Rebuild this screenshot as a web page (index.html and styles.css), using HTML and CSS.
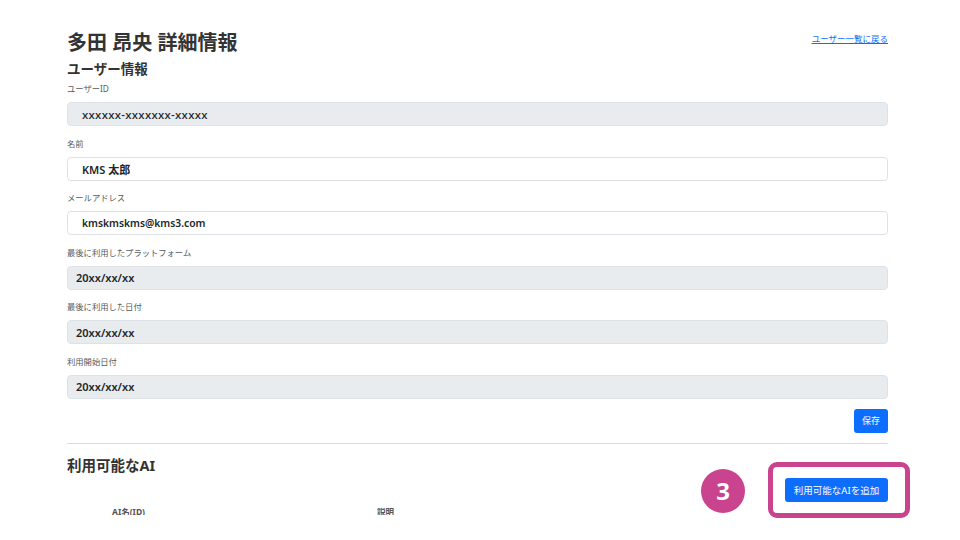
FILE: index.html
```html
<!DOCTYPE html>
<html lang="ja">
<head>
    <meta charset="UTF-8">
    <meta name="viewport" content="width=device-width, initial-scale=1.0">
    <title>多田 昂央 詳細情報</title>
    <link rel="stylesheet" href="styles.css">
</head>
<body>
    <div class="page">
        <div class="header">
            <h1>多田 昂央 詳細情報</h1>
            <a href="#" class="back-link">ユーザー一覧に戻る</a>
        </div>

        <h2>ユーザー情報</h2>
        <form class="user-form">
            <div class="field">
                <label>ユーザーID</label>
                <div class="input readonly wide id-value">xxxxxx-xxxxxxx-xxxxx</div>
            </div>
            <div class="field">
                <label>名前</label>
                <div class="input wide strong">KMS 太郎</div>
            </div>
            <div class="field">
                <label>メールアドレス</label>
                <div class="input wide strong email">kmskmskms@kms3.com</div>
            </div>
            <div class="field">
                <label>最後に利用したプラットフォーム</label>
                <div class="input readonly strong">20xx/xx/xx</div>
            </div>
            <div class="field">
                <label>最後に利用した日付</label>
                <div class="input readonly strong">20xx/xx/xx</div>
            </div>
            <div class="field">
                <label>利用開始日付</label>
                <div class="input readonly strong">20xx/xx/xx</div>
            </div>
            <div class="actions">
                <button type="button" class="btn">保存</button>
            </div>
        </form>

        <hr>

        <h3>利用可能なAI</h3>
        <div class="actions">
            <button type="button" class="btn btn-add">利用可能なAIを追加</button>
        </div>
        <table class="ai-table">
            <thead>
                <tr>
                    <th class="col-name">AI名(ID)</th>
                    <th class="col-desc">説明</th>
                </tr>
            </thead>
        </table>
    </div>

    <!-- step annotation -->
    <div class="step-badge">3</div>
    <div class="step-frame"></div>
</body>
</html>
```

FILE: styles.css
```css
/* Basic reset */
* {
    box-sizing: border-box;
    margin: 0;
    padding: 0;
}

body {
    position: relative;
    width: 960px;
    height: 540px;
    background-color: #ffffff;
    font-family: "Noto Sans", "Noto Sans CJK JP", sans-serif;
    color: #212529;
    overflow: hidden;
}

/* Page column, bottom is cut off */
.page {
    width: 821px;
    height: 515px;
    margin-left: 67px;
    padding-top: 29px;
    overflow: hidden;
}

.header {
    display: flex;
    justify-content: space-between;
    align-items: flex-start;
}

h1 {
    font-size: 20px;
    font-weight: 700;
    line-height: 27px;
    color: #333;
}

.back-link {
    margin-top: 3px;
    font-size: 8.5px;
    color: #0d6efd;
    text-decoration: underline;
}

h2 {
    margin-top: 2px;
    font-size: 13.5px;
    font-weight: 700;
    line-height: 22px;
    color: #333;
}

/* Form */
.user-form {
    margin-top: 3px;
}

.field {
    margin-bottom: 11.6px;
}

.field label {
    display: block;
    margin-bottom: 7px;
    font-size: 8.3px;
    line-height: 12px;
    color: #555b61;
}

.input {
    height: 24px;
    padding: 0 8px;
    display: flex;
    align-items: center;
    font-size: 10.5px;
    border: 1px solid #dee2e6;
    border-radius: 4px;
    background-color: #ffffff;
}

.input.wide {
    padding-left: 14px;
}

.input.readonly {
    background-color: #e9ecef;
}

.input.id-value {
    font-size: 11.5px;
    font-weight: 500;
    letter-spacing: 0.3px;
}

.input.strong {
    font-weight: 600;
    font-size: 11px;
}

.input.email {
    font-size: 10.3px;
}

.actions {
    display: flex;
    justify-content: flex-end;
}

.user-form .actions {
    margin-top: -1.6px;
}

.btn {
    height: 24px;
    padding: 0 8px;
    font-family: inherit;
    font-size: 9px;
    color: #ffffff;
    background-color: #0d6efd;
    border: none;
    border-radius: 3px;
}

hr {
    margin-top: 10px;
    border: none;
    border-top: 1px solid #dcdcdc;
}

h3 {
    margin-top: 10px;
    font-size: 14.5px;
    font-weight: 700;
    line-height: 22px;
    color: #333;
}

.btn-add {
    width: 103px;
    margin-top: 2px;
    font-size: 9.5px;
}

/* Table header */
.ai-table {
    width: 100%;
    margin-top: 4px;
    border-collapse: collapse;
}

.ai-table th {
    font-size: 8.5px;
    font-weight: 700;
    color: #555;
    text-align: left;
    line-height: 12px;
}

.col-name {
    width: 310px;
    padding-left: 45px;
}

/* Annotation overlay */
.step-badge {
    position: absolute;
    left: 701px;
    top: 469px;
    width: 44px;
    height: 44px;
    border-radius: 50%;
    background-color: #c9438f;
    color: #ffffff;
    font-family: "Open Sans", sans-serif;
    font-size: 24px;
    font-weight: 700;
    line-height: 44px;
    text-align: center;
}

.step-frame {
    position: absolute;
    left: 768px;
    top: 462px;
    width: 142px;
    height: 56px;
    border: 5px solid #c9438f;
    border-radius: 9px;
}
```
